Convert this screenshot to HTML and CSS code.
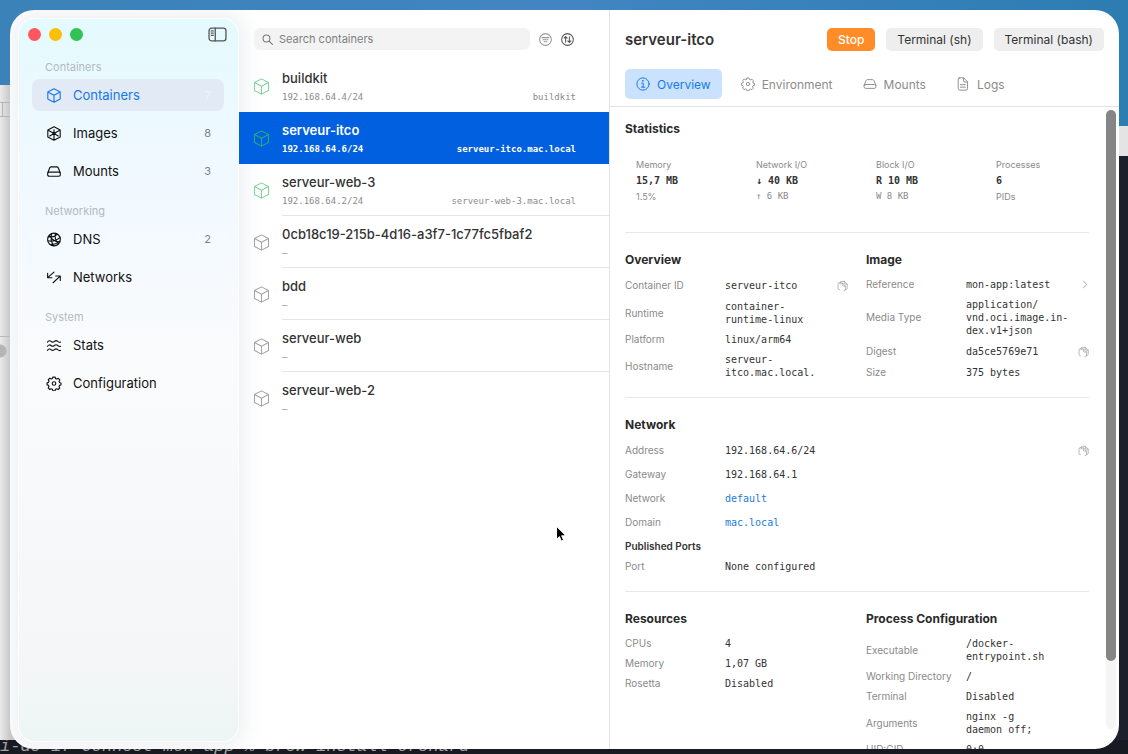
FILE: index.html
```html
<!DOCTYPE html>
<html lang="en">
<head>
    <meta charset="UTF-8">
    <meta name="viewport" content="width=device-width, initial-scale=1.0">
    <title>serveur-itco</title>
    <link rel="stylesheet" href="styles.css">
</head>
<body>
    <!-- Icons -->
    <svg class="sprite" aria-hidden="true">
        <symbol id="cube" viewBox="0 0 16 16">
            <path d="M8 .8 14.6 4.300v7.400L8 15.200 1.400 11.700V4.300zM1.400 4.300 8 7.800l6.600-3.500M8 7.800v7.400"/>
        </symbol>
        <symbol id="image" viewBox="0 0 16 16">
            <path d="M8 .8 14.6 4.300v7.400L8 15.200 1.400 11.700V4.300zM1.400 4.300 8 8l6.600-3.700M8 4v11M8 8l-4.500 2.600M8 8l4.500 2.600"/>
            <circle cx="8" cy="8" r="1"/>
        </symbol>
        <symbol id="drive" viewBox="0 0 16 16">
            <path d="M1.2 9.6 3.5 4q.5-1 1.6-1h5.8q1.1 0 1.6 1l2.3 5.6M3 8.6h10q1.8 0 1.8 1.8v.8q0 1.8-1.8 1.8H3q-1.8 0-1.8-1.8v-.8Q1.2 8.6 3 8.6z"/>
        </symbol>
        <symbol id="globe" viewBox="0 0 16 16">
            <circle cx="8" cy="8" r="6.8"/>
            <path d="M2 5q5 1.500 9.500-2.600M1.400 9.400q7 1.600 13-3.400M4 13.300q6 .2 10.200-3.600M5.500 1.800q-2 6.600 2 12.800M9.500 1.500q-1.500 6 3.300 11.200M3 3.600q3.500 6.400 11 7.200"/>
        </symbol>
        <symbol id="arrows" viewBox="0 0 16 16">
            <path d="M8 2.2 1.2 8.2M1.2 3.4v4.8h4.6M7 13.6l7.6-7M9.8 6.4h4.9v4.8"/>
        </symbol>
        <symbol id="waves" viewBox="0 0 16 16">
            <path d="M1 4.4q2-2.4 3.8-.8t3.6 0 3.6 0 3 .8M1 8.8q2-2.4 3.8-.8t3.6 0 3.6 0 3 .8M1 13.2q2-2.4 3.8-.8t3.6 0 3.6 0 3 .8"/>
        </symbol>
        <symbol id="gear" viewBox="0 0 16 16">
            <path d="M6.700 1.200h2.600l.4 1.600 1.300.5 1.500-.8 1.700 1.700-.8 1.500.5 1.300 1.500.4v2.200l-1.600.4-.5 1.300.8 1.500-1.700 1.700-1.500-.8-1.300.5-.4 1.500H6.700l-.4-1.600-1.300-.5-1.500.8-1.700-1.700.8-1.500-.5-1.300-1.500-.4V7.200l1.600-.4.5-1.300-.8-1.500 1.700-1.700 1.500.8 1.300-.5z"/>
            <circle cx="8" cy="8" r="1.900"/>
        </symbol>
        <symbol id="info" viewBox="0 0 16 16">
            <circle cx="8" cy="8" r="7"/>
            <path d="M6.400 7h1.800v4.500M6.200 11.600h3.900M7.700 4.100h.700v.600h-.700z"/>
        </symbol>
        <symbol id="doc" viewBox="0 0 16 16">
            <path d="M3.800 1h5l4.400 4.500v7.700q0 1.800-1.800 1.800H4.300q-1.800 0-1.800-1.800V2.500Q2.500 1 3.800 1zM8.600 1v3.200q0 1.500 1.500 1.500h3M5 8.800h5.700M5 11.600h5.700"/>
        </symbol>
        <symbol id="search" viewBox="0 0 16 16">
            <circle cx="6.500" cy="6.500" r="5"/>
            <path d="m10.200 10.200 5 5"/>
        </symbol>
        <symbol id="filter" viewBox="0 0 16 16">
            <circle cx="8" cy="8" r="7.200"/>
            <path d="M3.700 5.700h8.600M5 8.200h6M6.400 10.700h3.200"/>
        </symbol>
        <symbol id="sort" viewBox="0 0 16 16">
            <circle cx="8" cy="8" r="7.200"/>
            <path d="M5.700 11.500v-7M3.800 6.300l1.900-1.900 1.900 1.900M10.300 4.500v7M8.400 9.700l1.900 1.900 1.900-1.900"/>
        </symbol>
        <symbol id="copy" viewBox="0 0 16 16">
            <path d="M3.500 13.500q-2 0-2-2V5.200Q1.500 3 3.500 3h1M4.600 5V3q0-1.800 1.800-1.800h4.200l4.200 4v6q0 1.800-1.800 1.800h-.600M4.600 3.500h3.200l4.400 4.500v5.200q0 1.800-1.800 1.800M7.800 3.600v3.200q0 1.200 1.200 1.200h3M10.600 1.200v2.800q0 1.200 1.200 1.200h3"/>
        </symbol>
        <symbol id="chevron" viewBox="0 0 16 16">
            <path d="m5 1.500 6.500 6.500L5 14.500"/>
        </symbol>
        <symbol id="panel" viewBox="0 0 20 16">
            <rect x="1" y="1.200" width="18" height="13.600" rx="2.800"/>
            <path d="M7.600 1.200v13.600M3.400 4.200h2M3.400 6.600h2M3.400 9h2"/>
        </symbol>
    </svg>

    <!-- Windows behind the app -->
    <div class="back-window back-finder"></div>
    <div class="back-window back-bar"></div>
    <div class="back-window back-shell"></div>
    <div class="back-window back-terminal">i-de-17 Connect mon-app % brew install orchard</div>

    <div class="window">
        <aside class="sidebar">
            <div class="titlebar">
                <button class="light red" aria-label="Close"></button>
                <button class="light yellow" aria-label="Minimize"></button>
                <button class="light green" aria-label="Zoom"></button>
                <button class="icon-btn toggle" aria-label="Toggle sidebar"><svg class="icon-panel"><use href="#panel"/></svg></button>
            </div>
            <nav class="nav">
                <h2>Containers</h2>
                <a class="nav-item active" href="#"><svg class="icon"><use href="#cube"/></svg>Containers<span class="count">7</span></a>
                <a class="nav-item" href="#"><svg class="icon"><use href="#image"/></svg>Images<span class="count">8</span></a>
                <a class="nav-item" href="#"><svg class="icon"><use href="#drive"/></svg>Mounts<span class="count">3</span></a>
                <h2>Networking</h2>
                <a class="nav-item" href="#"><svg class="icon"><use href="#globe"/></svg>DNS<span class="count">2</span></a>
                <a class="nav-item" href="#"><svg class="icon"><use href="#arrows"/></svg>Networks</a>
                <h2>System</h2>
                <a class="nav-item" href="#"><svg class="icon"><use href="#waves"/></svg>Stats</a>
                <a class="nav-item" href="#"><svg class="icon"><use href="#gear"/></svg>Configuration</a>
            </nav>
        </aside>

        <section class="list">
            <div class="list-header">
                <label class="search">
                    <svg class="icon-sm"><use href="#search"/></svg>
                    <input type="text" placeholder="Search containers" aria-label="Search containers">
                </label>
                <button class="icon-btn" aria-label="Filter"><svg class="icon-round muted"><use href="#filter"/></svg></button>
                <button class="icon-btn" aria-label="Sort"><svg class="icon-round"><use href="#sort"/></svg></button>
            </div>
            <a class="row running no-line" href="#">
                <svg class="row-icon"><use href="#cube"/></svg>
                <div class="row-body"><div class="row-name">buildkit</div><div class="row-sub"><span>192.168.64.4/24</span><span>buildkit</span></div></div>
            </a>
            <a class="row running selected" href="#">
                <svg class="row-icon"><use href="#cube"/></svg>
                <div class="row-body"><div class="row-name">serveur-itco</div><div class="row-sub"><span>192.168.64.6/24</span><span>serveur-itco.mac.local</span></div></div>
            </a>
            <a class="row running" href="#">
                <svg class="row-icon"><use href="#cube"/></svg>
                <div class="row-body"><div class="row-name">serveur-web-3</div><div class="row-sub"><span>192.168.64.2/24</span><span>serveur-web-3.mac.local</span></div></div>
            </a>
            <a class="row" href="#">
                <svg class="row-icon"><use href="#cube"/></svg>
                <div class="row-body"><div class="row-name">0cb18c19-215b-4d16-a3f7-1c77fc5fbaf2</div><div class="row-sub"><span>–</span></div></div>
            </a>
            <a class="row" href="#">
                <svg class="row-icon"><use href="#cube"/></svg>
                <div class="row-body"><div class="row-name">bdd</div><div class="row-sub"><span>–</span></div></div>
            </a>
            <a class="row" href="#">
                <svg class="row-icon"><use href="#cube"/></svg>
                <div class="row-body"><div class="row-name">serveur-web</div><div class="row-sub"><span>–</span></div></div>
            </a>
            <a class="row no-line" href="#">
                <svg class="row-icon"><use href="#cube"/></svg>
                <div class="row-body"><div class="row-name">serveur-web-2</div><div class="row-sub"><span>–</span></div></div>
            </a>
        </section>

        <main class="detail">
            <header class="detail-header">
                <h1>serveur-itco</h1>
                <button class="btn btn-stop">Stop</button>
                <button class="btn">Terminal (sh)</button>
                <button class="btn">Terminal (bash)</button>
            </header>
            <div class="tabs">
                <button class="tab active"><svg class="icon-tab"><use href="#info"/></svg>Overview</button>
                <button class="tab"><svg class="icon-tab"><use href="#gear"/></svg>Environment</button>
                <button class="tab"><svg class="icon-tab"><use href="#drive"/></svg>Mounts</button>
                <button class="tab"><svg class="icon-tab"><use href="#doc"/></svg>Logs</button>
            </div>
            <div class="detail-body">
                <div class="content">
                    <section class="block block-stats">
                        <h3>Statistics</h3>
                        <div class="stats">
                            <div class="stat"><span>Memory</span><strong>15,7 MB</strong><span>1.5%</span></div>
                            <div class="stat"><span>Network I/O</span><strong>↓ 40 KB</strong><span class="mono">↑ 6 KB</span></div>
                            <div class="stat"><span>Block I/O</span><strong>R 10 MB</strong><span class="mono">W 8 KB</span></div>
                            <div class="stat"><span>Processes</span><strong>6</strong><span>PIDs</span></div>
                        </div>
                    </section>

                    <div class="block columns">
                        <section>
                            <h3>Overview</h3>
                            <dl class="props">
                                <div class="prop tall"><dt>Container ID</dt><dd>serveur-itco</dd><button class="icon-btn" aria-label="Copy container ID"><svg class="icon-copy"><use href="#copy"/></svg></button></div>
                                <div class="prop"><dt>Runtime</dt><dd>container-<br>runtime-linux</dd></div>
                                <div class="prop"><dt>Platform</dt><dd>linux/arm64</dd></div>
                                <div class="prop"><dt>Hostname</dt><dd>serveur-<br>itco.mac.local.</dd></div>
                            </dl>
                        </section>
                        <section>
                            <h3>Image</h3>
                            <dl class="props">
                                <div class="prop"><dt>Reference</dt><dd>mon-app:latest</dd><button class="icon-btn" aria-label="Open image"><svg class="icon-chevron"><use href="#chevron"/></svg></button></div>
                                <div class="prop"><dt>Media Type</dt><dd>application/<br>vnd.oci.image.in-<br>dex.v1+json</dd></div>
                                <div class="prop tall"><dt>Digest</dt><dd>da5ce5769e71</dd><button class="icon-btn" aria-label="Copy digest"><svg class="icon-copy"><use href="#copy"/></svg></button></div>
                                <div class="prop"><dt>Size</dt><dd>375 bytes</dd></div>
                            </dl>
                        </section>
                    </div>

                    <section class="block">
                        <h3>Network</h3>
                        <dl class="props loose">
                            <div class="prop tall"><dt>Address</dt><dd>192.168.64.6/24</dd><button class="icon-btn" aria-label="Copy address"><svg class="icon-copy"><use href="#copy"/></svg></button></div>
                            <div class="prop tall"><dt>Gateway</dt><dd>192.168.64.1</dd></div>
                            <div class="prop tall"><dt>Network</dt><dd><a href="#">default</a></dd></div>
                            <div class="prop tall"><dt>Domain</dt><dd><a href="#">mac.local</a></dd></div>
                        </dl>
                        <h4>Published Ports</h4>
                        <dl class="props">
                            <div class="prop"><dt>Port</dt><dd>None configured</dd></div>
                        </dl>
                    </section>

                    <div class="block columns">
                        <section>
                            <h3>Resources</h3>
                            <dl class="props">
                                <div class="prop"><dt>CPUs</dt><dd>4</dd></div>
                                <div class="prop"><dt>Memory</dt><dd>1,07 GB</dd></div>
                                <div class="prop"><dt>Rosetta</dt><dd>Disabled</dd></div>
                            </dl>
                        </section>
                        <section>
                            <h3>Process Configuration</h3>
                            <dl class="props">
                                <div class="prop"><dt>Executable</dt><dd>/docker-<br>entrypoint.sh</dd></div>
                                <div class="prop"><dt>Working Directory</dt><dd>/</dd></div>
                                <div class="prop"><dt>Terminal</dt><dd>Disabled</dd></div>
                                <div class="prop"><dt>Arguments</dt><dd>nginx -g<br>daemon off;</dd></div>
                                <div class="prop"><dt>UID:GID</dt><dd>0:0</dd></div>
                            </dl>
                        </section>
                    </div>
                </div>
                <div class="scrollbar"><div class="thumb"></div></div>
            </div>
        </main>
    </div>

    <svg class="cursor" viewBox="0 0 12 18"><path d="M1.500 1.500v12.700l2.900-2.600 1.900 4.500 2.300-1-1.900-4.300h3.900z"/></svg>
</body>
</html>
```

FILE: styles.css
```css
* {
    box-sizing: border-box;
    margin: 0;
    padding: 0;
}

body {
    position: relative;
    display: flex;
    height: 100vh;
    padding: 10px 9px 5px 10px;
    overflow: hidden;
    background: linear-gradient(90deg, #3b82b8, #4285c2 50%, #2c7db2);
    color: #333;
    font-family: Inter, "Liberation Sans", sans-serif;
    font-size: 13px;
}

a {
    color: inherit;
    text-decoration: none;
}

button {
    border: none;
    background: none;
    font-family: inherit;
    color: inherit;
}

svg {
    flex: none;
    fill: none;
    stroke: currentColor;
    stroke-linecap: round;
    stroke-linejoin: round;
}

.sprite {
    position: absolute;
    width: 0;
    height: 0;
}

/* Windows behind the app */
.back-window {
    position: absolute;
}

.back-finder {
    top: 85px;
    left: 0;
    width: 30px;
    bottom: 14px;
    background: radial-gradient(circle at 0 266px, #b5b5b5 6px, transparent 7px),
        linear-gradient(#b5b5b5, #b5b5b5) 0 17px / 10px 1px no-repeat,
        linear-gradient(#b5b5b5, #b5b5b5) 0 31px / 10px 1px no-repeat,
        linear-gradient(#b5b5b5, #b5b5b5) 2px 17px / 1px 14px no-repeat,
        linear-gradient(#bbb, #bbb) 0 251px / 100% 1px no-repeat,
        linear-gradient(90deg, #eaeaea, #c8c8c8 10px);
}

.back-bar {
    top: 126px;
    right: 0;
    width: 30px;
    height: 30px;
    background-color: #e4e4e4;
}

.back-shell {
    top: 156px;
    right: 0;
    bottom: 0;
    width: 30px;
    background-color: #1b202b;
}

.back-terminal {
    left: 0;
    right: 0;
    bottom: 0;
    height: 14px;
    overflow: hidden;
    background-color: #181a22;
    color: #a3a3a3;
    font: italic 17px/14px "Liberation Mono", monospace;
    white-space: nowrap;
}

/* App window */
.window {
    position: relative;
    display: flex;
    flex: 1;
    min-width: 0;
    overflow: hidden;
    border-radius: 24px;
    background-color: #fff;
}

.sidebar {
    flex: none;
    width: 221px;
    margin: 8px 0 7px 8px;
    border: 1px solid rgba(255, 255, 255, 0.8);
    border-radius: 16px;
    background: linear-gradient(#e4fafe, #edf9fe 14%, #f2f9ff 26%, #fafbfc 48%, #f5f6f7 88%, #edf6f5);
    box-shadow: 0 0 20px 6px rgba(40, 60, 90, 0.08);
    color: #1b1b1d;
}

.titlebar {
    display: flex;
    align-items: center;
    gap: 8px;
    height: 30px;
    padding: 0 11px 0 9px;
}

.light {
    width: 13px;
    height: 13px;
    border-radius: 50%;
}

.red {
    background-color: #ff5660;
}

.yellow {
    background-color: #fcbf07;
}

.green {
    background-color: #30c254;
}

.icon-btn {
    display: flex;
    flex: none;
    color: #555;
}

.toggle {
    margin-left: auto;
}

.icon-panel {
    width: 19px;
    height: 15px;
    stroke-width: 1.4;
}

.nav {
    display: flex;
    flex-direction: column;
    gap: 6px;
    padding: 10px 14px 0 13px;
}

.nav h2 {
    margin: 10px 0 -2px 13px;
    color: #b3bac0;
    font-size: 11px;
    font-weight: 400;
    line-height: 16px;
}

.nav h2:first-child {
    margin-top: 0;
}

.nav-item {
    display: flex;
    align-items: center;
    gap: 11px;
    height: 32px;
    padding: 0 13px 0 14px;
    border-radius: 8px;
    color: #111;
}

.nav-item.active {
    background-color: #e1eaf5;
    color: #1479ea;
}

.icon {
    width: 16px;
    height: 15px;
    stroke-width: 1.2;
}

.count {
    margin-left: auto;
    color: #7d8286;
    font-size: 11px;
}

.active .count {
    color: #f0f5fb;
}

/* Container list */
.list {
    flex: none;
    width: 371px;
    border-right: 1px solid #e4e4e4;
}

.list-header {
    display: flex;
    align-items: center;
    gap: 9px;
    height: 50px;
    padding: 8px 35px 0 15px;
}

.search {
    display: flex;
    flex: 1;
    align-items: center;
    gap: 6px;
    height: 22px;
    padding: 0 8px;
    border-radius: 6px;
    background-color: #f3f3f3;
    color: #777;
}

.search input {
    flex: 1;
    min-width: 0;
    border: none;
    outline: none;
    background: none;
    font: 11px Inter, sans-serif;
}

.search input::placeholder {
    color: #808080;
}

.icon-sm {
    width: 11px;
    height: 11px;
    stroke-width: 1.5;
}

.icon-round {
    width: 13px;
    height: 13px;
    stroke-width: 1.3;
}

.muted {
    color: #999;
}

.row {
    display: flex;
    gap: 12px;
    height: 52px;
    padding-left: 14px;
}

.row-icon {
    width: 17px;
    height: 17px;
    margin-top: 18px;
    color: #a5a5a5;
}

.running .row-icon {
    color: #7fd49a;
}

.row-body {
    flex: 1;
    padding: 10px 33px 0 0;
    border-bottom: 1px solid #e6e6e6;
}

.row-name {
    font-weight: 500;
    line-height: 16px;
}

.row-sub {
    display: flex;
    justify-content: space-between;
    padding-top: 5px;
    color: #8b8b8b;
    font: 9px/12px "DejaVu Sans Mono", monospace;
}

.no-line .row-body,
.selected .row-body {
    border-color: transparent;
}

.selected {
    position: relative;
    background-color: #0060df;
    color: #fff;
}

.selected .row-icon {
    color: #1fae7c;
}

.selected .row-name {
    font-weight: 600;
}

.selected .row-sub {
    color: #fff;
    font-weight: 700;
}

/* Detail pane */
.detail {
    display: flex;
    flex: 1;
    flex-direction: column;
    min-width: 0;
}

.detail-header {
    display: flex;
    align-items: center;
    gap: 11px;
    padding: 18px 15px 0 15px;
}

h1 {
    margin-right: auto;
    font-size: 15px;
    font-weight: 600;
}

.btn {
    height: 23px;
    padding: 0 11px;
    border-radius: 5px;
    background-color: #eee;
    font-size: 12px;
}

.btn-stop {
    background-color: #ff8c26;
    color: #fff;
    font-weight: 500;
}

.tabs {
    display: flex;
    gap: 8px;
    padding: 18px 15px 7px;
    border-bottom: 1px solid #e2e2e2;
}

.tab {
    display: flex;
    align-items: center;
    gap: 7px;
    height: 30px;
    padding: 0 11px;
    border-radius: 5px;
    color: #8c8c8c;
    font-size: 12px;
}

.tab.active {
    background-color: #cbe2ff;
    color: #1479ea;
}

.icon-tab {
    width: 14px;
    height: 14px;
    stroke-width: 1.1;
}

.detail-body {
    display: flex;
    flex: 1;
    gap: 17px;
    min-height: 0;
    padding: 0 3px 0 15px;
    overflow: hidden;
}

.content {
    flex: 1;
    min-width: 0;
}

.scrollbar {
    width: 10px;
    margin: 3px 0 20px;
    border-radius: 5px;
    background-color: #f5f5f5;
}

.thumb {
    height: 89%;
    border-radius: 5px;
    background-color: #858585;
}

.block {
    padding: 19px 0 18px;
    border-bottom: 1px solid #e8e8e8;
}

.block-stats {
    padding-top: 14px;
}

h3 {
    margin-bottom: 10px;
    color: #2a2a2a;
    font-size: 12px;
    font-weight: 700;
    line-height: 16px;
}

h4 {
    margin: 10px 0 7px;
    font-size: 10px;
    font-weight: 600;
    line-height: 13px;
}

.stats {
    display: grid;
    grid-template-columns: repeat(4, 1fr);
    gap: 16px;
}

.stat {
    display: flex;
    flex-direction: column;
    gap: 3px;
    padding: 11px;
    color: #8a8a8a;
    font-size: 9px;
    line-height: 13px;
    white-space: nowrap;
}

.stat strong {
    color: #333;
    font: 700 10px/13px "DejaVu Sans Mono", monospace;
}

.mono {
    font-family: "DejaVu Sans Mono", monospace;
}

.columns {
    display: grid;
    grid-template-columns: 1fr 1fr;
    gap: 18px;
}

.props {
    display: flex;
    flex-direction: column;
    gap: 7px;
}

.loose {
    gap: 9px;
}

.prop {
    display: flex;
    align-items: center;
    min-height: 13px;
    line-height: 13px;
}

.tall {
    min-height: 15px;
}

dt {
    flex: none;
    width: 100px;
    color: #8a8a8a;
    font-size: 10px;
}

dd {
    flex: 1;
    font: 10px/13px "DejaVu Sans Mono", monospace;
    white-space: nowrap;
}

dd a {
    color: #1a7bdc;
}

.prop .icon-btn {
    color: #999;
}

.icon-copy {
    width: 11px;
    height: 12px;
    stroke-width: 1;
}

.icon-chevron {
    width: 8px;
    height: 9px;
    stroke-width: 1.8;
}

.cursor {
    position: absolute;
    top: 525px;
    left: 555px;
    width: 12px;
    height: 18px;
    fill: #000;
    stroke: #fff;
}
```
